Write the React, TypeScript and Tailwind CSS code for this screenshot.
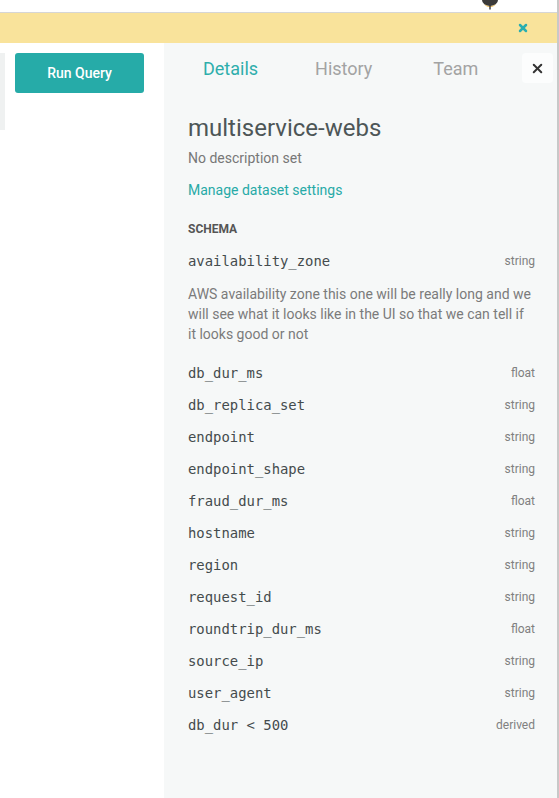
import { X } from "lucide-react";

type Field = { name: string; type: string; description?: string };

const FIELDS: Field[] = [
  {
    name: "availability_zone",
    type: "string",
    description:
      "AWS availability zone this one will be really long and we will see what it looks like in the UI so that we can tell if it looks good or not",
  },
  { name: "db_dur_ms", type: "float" },
  { name: "db_replica_set", type: "string" },
  { name: "endpoint", type: "string" },
  { name: "endpoint_shape", type: "string" },
  { name: "fraud_dur_ms", type: "float" },
  { name: "hostname", type: "string" },
  { name: "region", type: "string" },
  { name: "request_id", type: "string" },
  { name: "roundtrip_dur_ms", type: "float" },
  { name: "source_ip", type: "string" },
  { name: "user_agent", type: "string" },
  { name: "db_dur < 500", type: "derived" },
];

function SchemaRow({ field }: { field: Field }) {
  return (
    <div>
      <div className="flex h-[32px] items-center justify-between">
        <span className="font-['DejaVu_Sans_Mono',monospace] text-[13.9px] text-[#444b4d]">{field.name}</span>
        <span className="text-[12px] text-[#808080]">{field.type}</span>
      </div>
      {field.description ? (
        <p className="mt-[7px] mb-[13px] pr-[2px] text-[14px] leading-[20px] text-[#7b7b7b]">{field.description}</p>
      ) : null}
    </div>
  );
}

export default function App() {
  return (
    <div className="flex h-[798px] w-full flex-col overflow-hidden border-r-2 border-[#c8c8c8] bg-white font-['Roboto',sans-serif]">
      {/* top bar */}
      <div className="relative h-[13px] shrink-0 border-b border-[#d6d6d6] bg-white">
        <svg className="absolute left-[479px] top-0" width="22" height="11" viewBox="0 0 22 11">
          <ellipse cx="11" cy="0" rx="8" ry="6" fill="#3a3a3a" />
          <path d="M5 4 Q11 8.5 17 4 L15 6 Q11 8 7 6 Z" fill="#e9b23c" />
          <rect x="10.3" y="5.5" width="1.4" height="4" fill="#333" />
        </svg>
      </div>

      {/* banner */}
      <div className="flex h-[30px] shrink-0 items-center justify-end bg-[#f9e39b] pr-[28px]">
        <X className="h-[12px] w-[12px] text-[#2aaeb0]" strokeWidth={5} />
      </div>

      <div className="flex min-h-0 flex-1">
        {/* query builder side */}
        <div className="flex w-[164px] shrink-0 items-start pt-[10px]">
          <div className="h-[77px] w-[5px] bg-[#eff1f1]" />
          <button
            type="button"
            className="ml-[10px] flex h-[40px] w-[129px] items-center justify-center rounded-[3px] bg-[#26aba8] text-[14px] font-medium text-white"
          >
            Run Query
          </button>
        </div>

        {/* details panel */}
        <div className="flex-1 bg-[#f6f8f8]">
          <div className="mt-[10px] flex h-[30px] items-center pr-[4px]">
            <span className="ml-[39px] text-[18px] text-[#2eaeac]">Details</span>
            <span className="ml-[57px] text-[18px] text-[#a3a3a3]">History</span>
            <span className="ml-[61px] text-[18px] text-[#a3a3a3]">Team</span>
            <button
              type="button"
              className="ml-auto flex h-[30px] w-[31px] items-center justify-center rounded-[4px] bg-[#fcfdfd]"
            >
              <X className="h-[15px] w-[15px] text-[#333]" strokeWidth={3.2} />
            </button>
          </div>

          <div className="pl-[24px] pr-[22px]">
            <h1 className="mt-[32px] text-[24px] leading-[26px] text-[#4d5657]">multiservice-webs</h1>
            <p className="mt-[8px] text-[14px] leading-[18px] text-[#777]">No description set</p>
            <a className="mt-[13px] block text-[14px] leading-[20px] text-[#27aaa7]">Manage dataset settings</a>
            <h2 className="mt-[21px] text-[12px] font-bold leading-[16px] text-[#555]">SCHEMA</h2>
            <div className="mt-[8px]">
              {FIELDS.map((field) => (
                <SchemaRow key={field.name} field={field} />
              ))}
            </div>
          </div>
        </div>
      </div>
    </div>
  );
}
